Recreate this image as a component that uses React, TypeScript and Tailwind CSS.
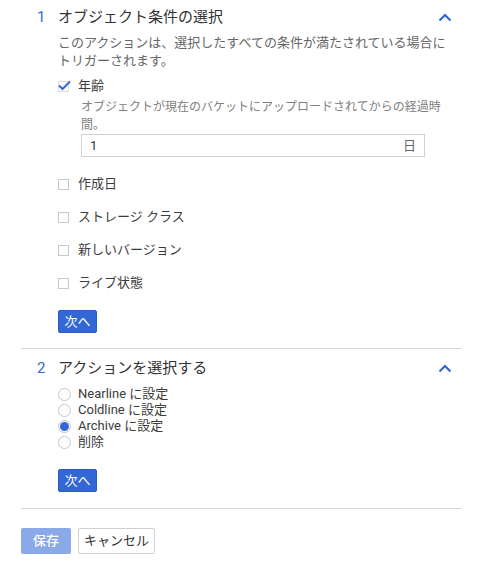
import { useState } from "react";

const FONT = { fontFamily: 'Roboto, "Noto Sans CJK JP", sans-serif' };

function ChevronUp() {
  return (
    <svg width="14" height="9" viewBox="0 0 14 9" className="text-[#3367d6]">
      <path d="M1.5 7.5 L7 2 L12.5 7.5" fill="none" stroke="currentColor" strokeWidth="2.2" />
    </svg>
  );
}

function Box({ checked, label }: { checked?: boolean; label: string }) {
  return (
    <div className="flex items-center h-[20px]">
      <div className="w-[20px] flex items-center">
        {checked ? (
          <div className="relative w-[11px] h-[11px] border border-[#dcdcdc] bg-white">
            <svg width="13" height="11" viewBox="0 0 13 11" className="absolute left-[-1px] top-[-2px]">
              <path d="M1 5.5 L4.5 9 L12 1.5" fill="none" stroke="#3367d6" strokeWidth="2" />
            </svg>
          </div>
        ) : (
          <div className="w-[11px] h-[11px] border border-[#c8c8c8] bg-white" />
        )}
      </div>
      <span className="text-[13px] text-[#3c3c3c]">{label}</span>
    </div>
  );
}

function Radio({ checked, label }: { checked?: boolean; label: string }) {
  return (
    <div className="flex items-center h-[16px]">
      <div className="w-[20px] flex items-center">
        <div className="w-[13px] h-[13px] rounded-full border border-[#c6c6c6] bg-white flex items-center justify-center">
          {checked && <div className="w-[9px] h-[9px] rounded-full bg-[#3367d6]" />}
        </div>
      </div>
      <span className="text-[13px] text-[#3c3c3c]">{label}</span>
    </div>
  );
}

function NextButton() {
  return (
    <button className="h-[23px] w-[39px] rounded-[2px] bg-[#3367d6] border border-[#2a5bc4] text-white text-[13px] flex items-center justify-center">
      次へ
    </button>
  );
}

export default function App() {
  const [days, setDays] = useState("1");

  return (
    <div className="w-[500px] h-[562px] bg-white" style={FONT}>
      <div className="ml-[21px] w-[440px]">
        {/* Step 1 */}
        <div className="flex items-center h-[34px]">
          <span className="w-[37px] pl-[16px] text-[15px] text-[#3367d6]">1</span>
          <span className="flex-1 text-[15px] text-[#333]">オブジェクト条件の選択</span>
          <span className="pr-[9px] flex items-center"><ChevronUp /></span>
        </div>
        <div className="pl-[37px]">
          <p className="text-[13px] leading-[18px] text-[#666]">
            このアクションは、選択したすべての条件が満たされている場合に<br />
            トリガーされます。
          </p>
          <div className="mt-[6px]">
            <Box checked label="年齢" />
          </div>
          <div className="pl-[23px]">
            <p className="mt-[2px] text-[12px] leading-[18px] text-[#808080]">
              オブジェクトが現在のバケットにアップロードされてからの経過時<br />
              間。
            </p>
            <div className="h-[23px] w-[344px] border border-[#d0d0d0] flex items-center px-[8px]">
              <input
                value={days}
                onChange={(e) => setDays(e.target.value)}
                className="flex-1 outline-none text-[13px] text-[#333] bg-transparent"
              />
              <span className="text-[13px] text-[#666]">日</span>
            </div>
          </div>
          <div className="mt-[17px] flex flex-col gap-[13px]">
            <Box label="作成日" />
            <Box label="ストレージ クラス" />
            <Box label="新しいバージョン" />
            <Box label="ライブ状態" />
          </div>
          <div className="mt-[17px]">
            <NextButton />
          </div>
        </div>
        <div className="mt-[15px] border-t border-[#d6d6d6]" />

        {/* Step 2 */}
        <div className="flex items-center h-[38px]">
          <span className="w-[37px] pl-[16px] text-[15px] text-[#3367d6]">2</span>
          <span className="flex-1 text-[15px] text-[#333]">アクションを選択する</span>
          <span className="pr-[9px] flex items-center"><ChevronUp /></span>
        </div>
        <div className="pl-[37px]">
          <div className="mt-[-1px] flex flex-col">
            <Radio label="Nearline に設定" />
            <Radio label="Coldline に設定" />
            <Radio checked label="Archive に設定" />
            <Radio label="削除" />
          </div>
          <div className="mt-[19px]">
            <NextButton />
          </div>
        </div>
        <div className="mt-[16px] border-t border-[#d6d6d6]" />

        <div className="mt-[19px] flex items-center gap-[7px]">
          <button className="h-[26px] w-[50px] rounded-[2px] bg-[#8aa9e8] text-white text-[13px] font-medium">
            保存
          </button>
          <button className="h-[26px] px-[5px] rounded-[2px] border border-[#d0d0d0] bg-white text-[13px] text-[#333]">
            キャンセル
          </button>
        </div>
      </div>
    </div>
  );
}
